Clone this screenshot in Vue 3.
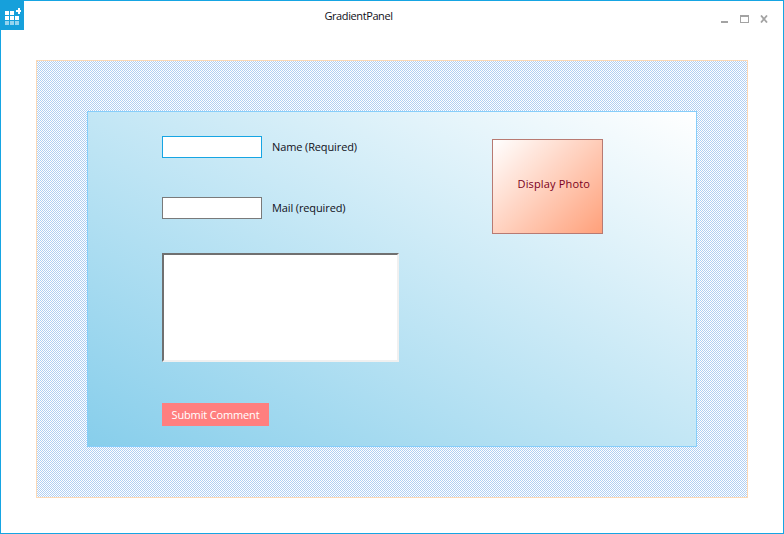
<template>
  <div class="window">
    <header class="titlebar">
      <div class="app-icon">
        <svg width="18" height="20" viewBox="0 0 18 20">
          <g fill="#fff">
            <rect x="0" y="5" width="4" height="4" />
            <rect x="5" y="5" width="4" height="4" />
            <rect x="0" y="10" width="4" height="4" />
            <rect x="5" y="10" width="4" height="4" />
            <rect x="10" y="10" width="4" height="4" />
            <rect x="0" y="15" width="4" height="4" opacity="0.55" />
            <rect x="5" y="15" width="4" height="4" opacity="0.55" />
            <rect x="10" y="15" width="4" height="4" opacity="0.55" />
            <path d="M11 4h2V2h2v2h1v2h-1v2h-2V6h-2z" />
          </g>
        </svg>
      </div>
      <div class="title">GradientPanel</div>
      <div class="controls">
        <svg width="8" height="3" viewBox="0 0 8 3"><rect width="7" height="2" y="1" fill="#a3a3a3" /></svg>
        <svg width="9" height="8" viewBox="0 0 9 8">
          <rect x="0.5" y="0.5" width="8" height="7" fill="none" stroke="#a3a3a3" />
          <rect x="0" y="0" width="9" height="2" fill="#a3a3a3" />
        </svg>
        <svg width="8" height="8" viewBox="0 0 8 8">
          <path d="M1 0.5l6 7M7 0.5l-6 7" stroke="#a3a3a3" stroke-width="1.8" fill="none" />
        </svg>
      </div>
    </header>

    <main class="content">
      <section class="hatch-panel">
        <div class="gradient-panel">
          <form class="comment-form" @submit.prevent>
            <div class="field">
              <input class="text-input focused" type="text" />
              <label>Name (Required)</label>
            </div>
            <div class="field">
              <input class="text-input" type="text" />
              <label>Mail (required)</label>
            </div>
            <textarea class="comment-box"></textarea>
            <button class="submit" type="submit">Submit Comment</button>
          </form>
          <div class="photo"><span>Display Photo</span></div>
        </div>
      </section>
    </main>
  </div>
</template>

<script setup>
</script>

<style>
html,
body {
  margin: 0;
  background: #fff;
}
</style>

<style scoped>
.window {
  box-sizing: border-box;
  width: 784px;
  height: 534px;
  border: 1px solid #16a5e3;
  background: #fff;
  font-family: 'Open Sans', 'Noto Sans', sans-serif;
  font-size: 11px;
  color: #101020;
  display: flex;
  flex-direction: column;
}
.titlebar {
  height: 59px;
  flex: none;
  position: relative;
}
.app-icon {
  position: absolute;
  left: -1px;
  top: -1px;
  box-sizing: border-box;
  width: 24px;
  height: 30px;
  padding: 6px 0 0 5px;
  background: #16a0db;
}
.app-icon svg {
  display: block;
}
.title {
  text-align: center;
  padding-top: 7px;
  padding-right: 67px;
  line-height: 15px;
  letter-spacing: -0.4px;
}
.controls {
  position: absolute;
  top: 14px;
  right: 15px;
  display: flex;
  align-items: flex-start;
  gap: 11px;
}
.controls svg {
  display: block;
}
.controls svg:first-child {
  margin-top: 5px;
}
.content {
  padding: 0 35px;
}
.hatch-panel {
  box-sizing: border-box;
  width: 712px;
  height: 438px;
  border: 1px solid #fcd9b6;
  padding: 50px;
  background-color: #fff;
  background-image: url("data:image/svg+xml,%3Csvg xmlns='http://www.w3.org/2000/svg' width='2' height='2' shape-rendering='crispEdges'%3E%3Crect width='2' height='2' fill='%23fff'/%3E%3Crect width='1' height='1' fill='%23b0cff2'/%3E%3Crect x='1' y='1' width='1' height='1' fill='%23b0cff2'/%3E%3C/svg%3E");
  background-size: 2px 2px;
}
.gradient-panel {
  box-sizing: border-box;
  width: 610px;
  height: 336px;
  border: 1px solid #87cefa;
  background: linear-gradient(to top right, #87ceeb, #fff);
  padding: 24px 0 0 74px;
  display: flex;
  align-items: flex-start;
}
.comment-form {
  width: 330px;
  display: flex;
  flex-direction: column;
  align-items: flex-start;
}
.field {
  display: flex;
  align-items: center;
  gap: 10px;
  height: 22px;
  margin-bottom: 39px;
}
.field label {
  line-height: 22px;
  letter-spacing: -0.12px;
}
.field:nth-child(2) {
  margin-bottom: 34px;
}
.text-input {
  box-sizing: border-box;
  width: 100px;
  height: 22px;
  padding: 0;
  border: 1px solid #7a7a7a;
  background: #fff;
  outline: none;
}
.text-input.focused {
  border-color: #16a5e3;
}
.comment-box {
  box-sizing: border-box;
  display: block;
  width: 237px;
  height: 109px;
  padding: 0;
  resize: none;
  outline: none;
  background: #fff;
  border: 2px solid;
  border-color: #707070 #f0f0f0 #f0f0f0 #707070;
  margin-bottom: 41px;
}
.submit {
  width: 107px;
  height: 23px;
  padding: 0;
  border: none;
  background: #ff7f7f;
  color: #fff;
  font-family: inherit;
  font-size: 11px;
  letter-spacing: -0.15px;
}
.photo {
  box-sizing: border-box;
  width: 111px;
  height: 95px;
  margin: 3px 0 0 0;
  border: 1px solid #b87a72;
  background: linear-gradient(135deg, #fff, #ffa07a);
  color: #7a0020;
  display: flex;
  align-items: center;
  justify-content: flex-end;
  padding: 0 12px 7px 0;
  letter-spacing: 0.15px;
}
</style>
